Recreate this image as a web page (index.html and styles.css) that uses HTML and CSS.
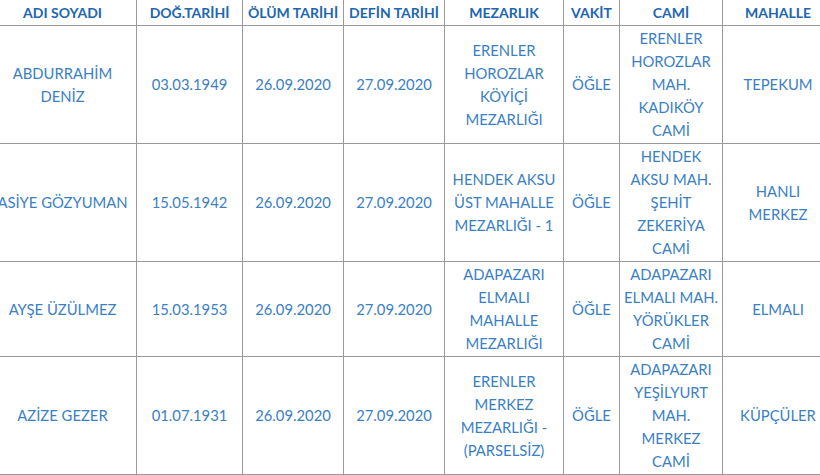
FILE: index.html
```html
<!DOCTYPE html>
<html lang="tr">
<head>
<meta charset="utf-8">
<title>Vefat Listesi</title>
<link rel="stylesheet" href="styles.css">
</head>
<body>
<table class="list">
  <colgroup>
    <col class="c-name">
    <col class="c-date">
    <col class="c-date2">
    <col class="c-date3">
    <col class="c-cem">
    <col class="c-time">
    <col class="c-mosque">
    <col class="c-area">
  </colgroup>
  <thead>
    <tr>
      <th>ADI SOYADI</th>
      <th>DOĞ.TARİHİ</th>
      <th>ÖLÜM TARİHİ</th>
      <th>DEFİN TARİHİ</th>
      <th>MEZARLIK</th>
      <th>VAKİT</th>
      <th>CAMİ</th>
      <th>MAHALLE</th>
    </tr>
  </thead>
  <tbody>
    <tr>
      <td>ABDURRAHİM DENİZ</td>
      <td>03.03.1949</td>
      <td>26.09.2020</td>
      <td>27.09.2020</td>
      <td>ERENLER HOROZLAR KÖYİÇİ MEZARLIĞI</td>
      <td>ÖĞLE</td>
      <td>ERENLER HOROZLAR MAH. KADIKÖY CAMİ</td>
      <td>TEPEKUM</td>
    </tr>
    <tr>
      <td>ASİYE GÖZYUMAN</td>
      <td>15.05.1942</td>
      <td>26.09.2020</td>
      <td>27.09.2020</td>
      <td>HENDEK AKSU ÜST MAHALLE MEZARLIĞI - 1</td>
      <td>ÖĞLE</td>
      <td>HENDEK AKSU MAH. ŞEHİT ZEKERİYA CAMİ</td>
      <td>HANLI MERKEZ</td>
    </tr>
    <tr>
      <td>AYŞE ÜZÜLMEZ</td>
      <td>15.03.1953</td>
      <td>26.09.2020</td>
      <td>27.09.2020</td>
      <td>ADAPAZARI ELMALI MAHALLE MEZARLIĞI</td>
      <td>ÖĞLE</td>
      <td>ADAPAZARI ELMALI MAH. YÖRÜKLER CAMİ</td>
      <td>ELMALI</td>
    </tr>
    <tr>
      <td>AZİZE GEZER</td>
      <td>01.07.1931</td>
      <td>26.09.2020</td>
      <td>27.09.2020</td>
      <td>ERENLER MERKEZ MEZARLIĞI - (PARSELSİZ)</td>
      <td>ÖĞLE</td>
      <td>ADAPAZARI YEŞİLYURT MAH. MERKEZ CAMİ</td>
      <td>KÜPÇÜLER</td>
    </tr>
  </tbody>
</table>
</body>
</html>
```
FILE: styles.css
```css
html, body {
  margin: 0;
  padding: 0;
  background: #ffffff;
  overflow: hidden;
}

.list {
  border-collapse: collapse;
  table-layout: fixed;
  width: 845px;
  margin: -1px 0 0 -12px;
  font-family: Lato, "Open Sans", "Liberation Sans", sans-serif;
  font-size: 14.8px;
  line-height: 23px;
  color: #3a80c3;
}

.c-name { width: 148px; }
.c-date { width: 106px; }
.c-date2 { width: 101px; }
.c-date3 { width: 101px; }
.c-cem { width: 119px; }
.c-time { width: 56px; }
.c-mosque { width: 103px; }
.c-area { width: 111px; }

.list th,
.list td {
  border: 1px solid #9a9a9a;
  padding: 1px 4px;
  text-align: center;
  vertical-align: middle;
}

.list th {
  font-weight: 700;
  font-size: 14px;
  color: #2166b0;
  padding: 1px 1px;
  white-space: nowrap;
}
```
